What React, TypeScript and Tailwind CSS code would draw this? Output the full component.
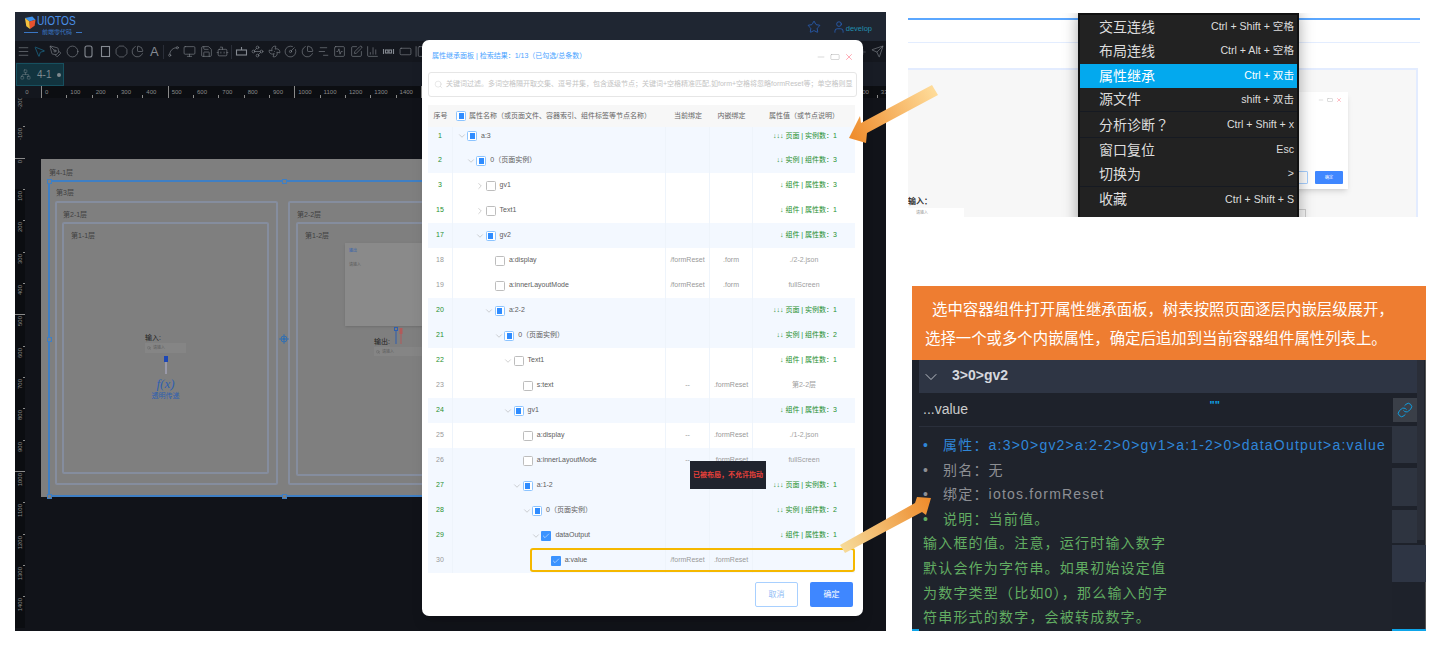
import type { ReactNode } from 'react'
import {
  Bot, ChartColumn, ChartNoAxesGantt, ChartPie, ChevronDown, ChevronRight, Circle, CircleGauge, Check, Fan,
  GalleryHorizontal, Link, Menu, Minus, Monitor, MousePointer2, Network, Octagon, PenTool, Plus,
  RectangleHorizontal, Save, Search, Send, Spline, SquareActivity, SquarePen, Star,
  User, Waypoints, X,
} from 'lucide-react'

type Check = 'none' | 'half' | 'checked'
type Row = {
  no: number
  depth: number
  name: string
  open?: boolean
  check: Check
  tint?: boolean
  bind?: string
  inner?: string
  value?: string
  node?: boolean
}

const rows: Row[] = [
  { no: 1, depth: 0, name: 'a:3', open: true, check: 'half', tint: true, value: '↓↓↓ 页面 | 实例数：1', node: true },
  { no: 2, depth: 1, name: '0（页面实例）', open: true, check: 'half', tint: true, value: '↓↓ 实例 | 组件数：3', node: true },
  { no: 3, depth: 2, name: 'gv1', open: false, check: 'none', value: '↓ 组件 | 属性数：3', node: true },
  { no: 15, depth: 2, name: 'Text1', open: false, check: 'none', value: '↓ 组件 | 属性数：1', node: true },
  { no: 17, depth: 2, name: 'gv2', open: true, check: 'half', tint: true, value: '↓ 组件 | 属性数：3', node: true },
  { no: 18, depth: 3, name: 'a:display', check: 'none', bind: '/formReset', inner: '.form', value: './2-2.json' },
  { no: 19, depth: 3, name: 'a:innerLayoutMode', check: 'none', bind: '/formReset', inner: '.form', value: 'fullScreen' },
  { no: 20, depth: 3, name: 'a:2-2', open: true, check: 'half', tint: true, value: '↓↓↓ 页面 | 实例数：1', node: true },
  { no: 21, depth: 4, name: '0（页面实例）', open: true, check: 'half', tint: true, value: '↓↓ 实例 | 组件数：2', node: true },
  { no: 22, depth: 5, name: 'Text1', open: true, check: 'none', value: '↓ 组件 | 属性数：1', node: true },
  { no: 23, depth: 6, name: 's:text', check: 'none', bind: '--', inner: '.formReset', value: '第2-2层' },
  { no: 24, depth: 5, name: 'gv1', open: true, check: 'half', tint: true, value: '↓ 组件 | 属性数：3', node: true },
  { no: 25, depth: 6, name: 'a:display', check: 'none', bind: '--', inner: '.formReset', value: './1-2.json' },
  { no: 26, depth: 6, name: 'a:innerLayoutMode', check: 'none', tint: true, bind: '--', inner: '.formReset', value: 'fullScreen' },
  { no: 27, depth: 6, name: 'a:1-2', open: true, check: 'half', tint: true, value: '↓↓↓ 页面 | 实例数：1', node: true },
  { no: 28, depth: 7, name: '0（页面实例）', open: true, check: 'half', tint: true, value: '↓↓ 实例 | 组件数：2', node: true },
  { no: 29, depth: 8, name: 'dataOutput', open: true, check: 'checked', tint: true, value: '↓ 组件 | 属性数：1', node: true },
  { no: 30, depth: 9, name: 'a:value', check: 'checked', tint: true, bind: '/formReset', inner: '.formReset' },
]

const hTicks = Array.from({ length: 34 }, (_, i) => i * 100)
const vTicks = Array.from({ length: 17 }, (_, i) => (i - 2) * 100)

const menuItems = [
  { label: '交互连线', keys: 'Ctrl + Shift + 空格', cls: 'h-[24px]' },
  { label: '布局连线', keys: 'Ctrl + Alt + 空格', cls: 'h-[24px]' },
  { label: '属性继承', keys: 'Ctrl + 双击', cls: 'h-[24px] mt-[1px] bg-[#03a9ee] text-white' },
  { label: '源文件', keys: 'shift + 双击', cls: 'h-[24px] border-b border-[#161a22]' },
  { label: '分析诊断', mark: '？', keys: 'Ctrl + Shift + x', cls: 'h-[26px] border-b border-[#161a22]' },
  { label: '窗口复位', keys: 'Esc', cls: 'h-[24px]' },
  { label: '切换为', keys: '>', cls: 'h-[25px] border-b border-[#161a22]' },
  { label: '收藏', keys: 'Ctrl + Shift + S', cls: 'h-[25px]' },
  { label: '发布文件', keys: '', cls: 'h-[25px]' },
]

function CheckBox({ state }: { state: Check }) {
  if (state === 'checked') {
    return (
      <span className="flex w-[10px] h-[10px] shrink-0 items-center justify-center bg-[#3b93ff] rounded-[1px]">
        <Check size={8} color="#ffffff" strokeWidth={1.5} />
      </span>
    )
  }
  if (state === 'half') {
    return (
      <span className="flex w-[10px] h-[10px] shrink-0 items-center justify-center bg-white border border-[#8cc4ff] rounded-[1.5px]">
        <span className="block w-[5px] h-[6px] bg-[#2f8cff]" />
      </span>
    )
  }
  return <span className="block w-[10px] h-[10px] shrink-0 bg-white border border-[#bdbdbd] rounded-[1.5px]" />
}

function TableRow({ row, first }: { row: Row; first?: boolean }) {
  return (
    <div
      className={`grid grid-cols-[25px_213px_44px_43px_102px] text-[7px] ${first ? 'h-[21px]' : 'h-[25px]'} ${
        row.tint ? 'bg-[#f3f8ff]' : 'bg-white'
      }`}
    >
      <div
        className={`flex items-center justify-center border-r border-[#eef4fb] ${first ? 'pb-[3px]' : ''} ${
          row.node ? 'text-[#1f8f2f]' : 'text-[#999999]'
        }`}
      >
        {row.no}
      </div>
      <div className={`flex items-center border-r border-[#eef4fb] ${first ? 'pb-[3px]' : ''}`}>
        <div className="flex items-center" style={{ paddingLeft: 3 + row.depth * 9.3 }}>
          <span className="flex w-[11px] shrink-0 justify-center text-[#999999]">
            {row.open === true && <ChevronDown size={10} strokeWidth={1.1} />}
            {row.open === false && <ChevronRight size={10} strokeWidth={1.1} />}
          </span>
          <CheckBox state={row.check} />
          <span className="ml-[4px] whitespace-nowrap text-[#5c5c5c]">{row.name}</span>
        </div>
      </div>
      <div className={`flex items-center justify-center border-r border-[#eef4fb] text-[#999999] ${first ? 'pb-[3px]' : ''}`}>
        {row.bind}
      </div>
      <div className={`flex items-center justify-center border-r border-[#eef4fb] text-[#999999] ${first ? 'pb-[3px]' : ''}`}>
        {row.inner}
      </div>
      <div
        className={`flex items-center whitespace-nowrap ${first ? 'pb-[3px]' : ''} ${
          row.node ? 'justify-end pr-[18px] text-[#1f8f2f]' : 'justify-center text-[#a0a0a0]'
        }`}
      >
        {row.value}
      </div>
    </div>
  )
}

function Tool({ children }: { children: ReactNode }) {
  return <span className="flex w-[16.4px] shrink-0 justify-center">{children}</span>
}

function ToolSep() {
  return (
    <span className="flex w-[2.6px] shrink-0 justify-center">
      <span className="block w-px h-[14px] bg-[#2a2e38]" />
    </span>
  )
}

function Toolbar() {
  const p = { size: 13, strokeWidth: 1.1 }
  return (
    <div className="flex h-[21px] items-center bg-[#14171e] text-[#858a92] shrink-0">
      <Tool><Menu {...p} /></Tool>
      <Tool><MousePointer2 {...p} className="text-[#1f7fa6]" /></Tool>
      <Tool><PenTool {...p} /></Tool>
      <Tool><Circle {...p} /></Tool>
      <Tool>
        <svg width="13" height="13" viewBox="0 0 13 13" fill="none" stroke="currentColor" strokeWidth="1.1">
          <rect x="3" y="1" width="7" height="11" rx="2" />
        </svg>
      </Tool>
      <Tool>
        <svg width="13" height="13" viewBox="0 0 13 13" fill="none" stroke="currentColor" strokeWidth="1.1">
          <rect x="2.5" y="1.5" width="8" height="10" />
        </svg>
      </Tool>
      <Tool><Octagon {...p} /></Tool>
      <Tool><ChartPie {...p} /></Tool>
      <Tool><span className="text-[13px] leading-none">A</span></Tool>
      <ToolSep />
      <Tool><Spline {...p} /></Tool>
      <Tool><Monitor {...p} /></Tool>
      <Tool><Save {...p} /></Tool>
      <Tool><Bot {...p} /></Tool>
      <ToolSep />
      <Tool>
        <svg width="13" height="13" viewBox="0 0 13 13" fill="none" stroke="currentColor" strokeWidth="1.1">
          <rect x="1.5" y="5" width="10" height="5" />
          <path d="M6.5 5V2" />
        </svg>
      </Tool>
      <Tool><Waypoints {...p} /></Tool>
      <Tool><Fan {...p} /></Tool>
      <Tool><CircleGauge {...p} /></Tool>
      <Tool><ChartPie {...p} /></Tool>
      <Tool><ChartNoAxesGantt {...p} /></Tool>
      <Tool><SquareActivity {...p} /></Tool>
      <Tool><SquarePen {...p} /></Tool>
      <Tool><ChartColumn {...p} /></Tool>
      <Tool>
        <svg width="13" height="13" viewBox="0 0 13 13" fill="none" stroke="currentColor" strokeWidth="1.1">
          <path d="M1.5 4v5M11.5 4v5" />
          <rect x="3.5" y="5" width="2.5" height="3" />
          <rect x="7" y="5" width="2.5" height="3" />
        </svg>
      </Tool>
      <Tool><RectangleHorizontal {...p} /></Tool>
      <Tool><GalleryHorizontal {...p} /></Tool>
      <div className="ml-auto flex items-center gap-[4px] pr-[2px]">
        <Plus size={8} strokeWidth={1.2} />
        <Send {...p} />
      </div>
    </div>
  )
}

function HRuler() {
  return (
    <div className="flex h-[12px] shrink-0 overflow-hidden bg-[#0c0e12] text-[6px] text-[#8a8a8a]">
      <div className="flex w-[26px] shrink-0 items-center justify-center bg-[#14171e] pr-[2px]">0</div>
      {hTicks.map((v) => (
        <div key={v} className="relative w-[25.33px] shrink-0 pl-[4px] pt-[1px] leading-[10px]">
          <span className={`absolute left-0 bottom-0 w-px bg-[#8a8a8a] ${v % 500 === 0 ? 'h-full' : 'h-[3px]'}`} />
          {v}
        </div>
      ))}
    </div>
  )
}

function VRuler() {
  return (
    <div className="w-[10px] shrink-0 overflow-hidden text-[6px] text-[#8a8a8a]">
      <div className="-mt-[3px]">
        {vTicks.map((v) => (
          <div key={v} className={`relative flex h-[31.33px] items-start justify-center pt-[2px] ${v > 0 ? 'bg-[#0b0d11]' : ''}`}>
            <span className={`absolute right-0 top-0 h-px bg-[#8a8a8a] ${v % 500 === 0 ? 'w-full' : 'w-[2px]'}`} />
            <span className="rotate-180 leading-none [writing-mode:vertical-rl]">{v}</span>
          </div>
        ))}
      </div>
    </div>
  )
}

function Handle({ className }: { className: string }) {
  return <span className={`absolute w-[5px] h-[5px] border border-[#3f7fc4] bg-[#7f7f7f] ${className}`} />
}

function Canvas() {
  return (
    <div className="relative flex-1 bg-[#111319]">
      <div className="absolute left-[16px] top-[61px] flex h-[338px] w-[760px] flex-col bg-[#7f7f7f] pl-[7px] pt-[8px] text-[7px] leading-[12px] text-[#3f3f3f]">
        <div className="ml-[1px] h-[13px]">第4-1层</div>
        <div className="relative flex-1 border-y-2 border-l-2 border-[#3f7fc4] pl-[5px] pt-[5px]">
          <div className="ml-[1px]">第3层</div>
          <div className="mt-[2px] flex gap-[10px]">
            <div className="h-[284px] w-[223px] border-2 border-[#858d9e] rounded-[2px] pl-[5px] pt-[6px]">
              <div className="ml-[1px]">第2-1层</div>
              <div className="relative mt-[1px] h-[252px] w-[207px] border-2 border-[#858d9e] rounded-[2px] pl-[7px] pt-[6px]">
                第1-1层
                <div className="absolute left-[81px] top-[109px] w-[41px] text-[#222222]">
                  <div className="leading-[10px]">输入:</div>
                  <div className="flex h-[10px] items-center gap-[2px] bg-[#858585] pl-[2px] text-[4px] leading-none text-[#5c5c5c]">
                    <Search size={4} />
                    请输入
                  </div>
                  <div className="ml-[19px] flex h-[24px] w-[4px] flex-col items-center">
                    <span className="mt-[3px] block h-[6px] w-[4px] bg-[#1d47b5]" />
                    <span className="block h-[12px] w-[2px] bg-[#9a9aaa]" />
                  </div>
                  <div className="flex flex-col items-center whitespace-nowrap text-[#2f5fb0]">
                    <span className="text-[13px] italic leading-[14px] [font-family:'Liberation_Serif',serif]">f(x)</span>
                    <span className="text-[7px] leading-[9px]">透明传递</span>
                  </div>
                </div>
              </div>
            </div>
            <div className="h-[284px] w-[223px] border-2 border-[#858d9e] rounded-[2px] pl-[6px] pt-[6px]">
              <div className="ml-[1px]">第2-2层</div>
              <div className="relative mt-[1px] h-[254px] w-[240px] border-2 border-[#858d9e] rounded-[2px] pl-[7px] pt-[6px]">
                第1-2层
                <div className="absolute left-[47px] top-[19px] h-[83px] w-[100px] bg-[#8a8a8a] pl-[4px] pt-[2px] text-[4px] text-[#5c5c5c] shadow-sm">
                  <div className="text-[#2f5fb0]">输出</div>
                  <div className="mt-[2px]">请输入</div>
                </div>
                <div className="absolute left-[76px] top-[113px] w-[60px] text-[#222222]">
                  <div className="leading-[10px]">输出:</div>
                  <div className="flex h-[9px] items-center gap-[2px] bg-[#858585] pl-[2px] text-[4px] leading-none text-[#5c5c5c]">
                    <Search size={4} />
                    请输入
                  </div>
                </div>
                <svg className="absolute left-[96px] top-[103px]" width="10" height="18" viewBox="0 0 10 18">
                  <path d="M2 3v14" stroke="#2f5fb0" strokeWidth="1" />
                  <rect x="0.5" y="0.5" width="3" height="3" fill="none" stroke="#2f5fb0" />
                  <path d="M7 3v14" stroke="#b25a5a" strokeWidth="1" />
                  <rect x="5.5" y="1" width="3" height="6" fill="#b25a5a" />
                </svg>
              </div>
            </div>
          </div>
          <Handle className="-left-[3.5px] -top-[3.5px]" />
          <Handle className="left-[232px] -top-[3.5px]" />
          <Handle className="-left-[3.5px] top-[155px]" />
          <Handle className="-left-[3.5px] -bottom-[3.5px]" />
          <Handle className="left-[232px] -bottom-[3.5px]" />
          <svg className="absolute left-[229px] top-[152px]" width="10" height="10" viewBox="0 0 10 10" fill="none" stroke="#2f6fb5">
            <circle cx="5" cy="5" r="3" strokeWidth="1" />
            <path d="M5 0v10M0 5h10" strokeWidth="0.8" />
            <circle cx="5" cy="5" r="1" fill="#2f6fb5" />
          </svg>
        </div>
      </div>
    </div>
  )
}

function Modal() {
  return (
    <div className="absolute left-[407px] top-[28px] flex h-[576px] w-[441px] flex-col rounded-[7px] bg-white px-[6px] shadow-lg">
      <div className="flex h-[32px] shrink-0 items-center justify-between pl-[4px] pt-[1px]">
        <span className="text-[7px] text-[#4aa3ff]">属性继承面板 | 检索结果：1/13（已勾选/总条数）</span>
        <div className="flex items-center gap-[4px] pr-[3px]">
          <Minus size={10} strokeWidth={1} className="text-[#a0a0a0]" />
          <RectangleHorizontal size={10} strokeWidth={1} className="text-[#a0a0a0]" />
          <X size={10} strokeWidth={1.2} className="text-[#ff5a6e]" />
        </div>
      </div>
      <div className="flex h-[25px] shrink-0 items-center gap-[3px] overflow-hidden rounded-[3px] border border-[#e6e6e6] pl-[5px] text-[7px] whitespace-nowrap text-[#c4c4c4]">
        <Search size={9} strokeWidth={1} className="shrink-0" />
        关键词过滤。多词空格隔开取交集、逗号并集，包含逐级节点；关键词+空格精准匹配,如form+空格将忽略formReset等；单空格则显
      </div>
      <div className="mt-[8px] w-[427px]">
        <div className="grid h-[22px] grid-cols-[25px_213px_44px_43px_102px] items-center bg-[#f7f7f7] text-[7px] text-[#666666]">
          <span className="text-center">序号</span>
          <span className="flex items-center gap-[3px] pl-[3px] whitespace-nowrap">
            <CheckBox state="half" />
            属性名称（或页面文件、容器索引、组件标签等节点名称）
          </span>
          <span className="text-center">当前绑定</span>
          <span className="text-center">内嵌绑定</span>
          <span className="text-center whitespace-nowrap">属性值（或节点说明）</span>
        </div>
        {rows.map((r, i) => (
          <TableRow key={r.no} row={r} first={i === 0} />
        ))}
      </div>
      <div className="mt-[9px] flex justify-end gap-[12px] pr-[4px] text-[8px]">
        <button className="h-[25px] w-[43px] rounded-[2px] border border-[#a8d0ff] bg-white text-[#8fbcf5]">取消</button>
        <button className="h-[25px] w-[43px] rounded-[2px] bg-[#3f87ff] text-white">确定</button>
      </div>
      <div className="absolute left-[108px] top-[508px] h-[24px] w-[325px] rounded-[3px] border-2 border-[#f5b800]" />
      <div className="absolute left-[268px] top-[421px] flex h-[28px] w-[76px] items-center justify-center bg-[#20242e] text-[7px] font-bold text-[#e8403a]">
        已被布局，不允许拖动
      </div>
    </div>
  )
}

function LeftShot() {
  return (
    <div className="relative flex h-[619px] w-[871px] shrink-0 flex-col overflow-hidden bg-[#111319]">
      <div className="flex h-[29px] shrink-0 items-start bg-[#1f2632] pl-[9px] pr-[14px] pt-[3px]">
        <svg width="12" height="14" viewBox="0 0 13 15" className="mt-[1px] shrink-0">
          <path d="M1 2 L9 0.5 L12.5 4 L6 6 Z" fill="#3b8fe8" />
          <path d="M1 2 L6 6 L6.5 14 L2.5 11 Z" fill="#f5c23e" />
          <path d="M6 6 L12.5 4 L11.5 10.5 L6.5 14 Z" fill="#e8522f" />
        </svg>
        <div className="ml-[1px] flex flex-col">
          <span className="origin-left scale-x-[0.81] text-[12.5px] leading-[13px] text-[#4a90e8]">UIOTOS</span>
          <div className="-ml-[13px] flex items-center gap-[4px] text-[6px] leading-[8px] text-[#3a76c4]">
            <span className="block h-px w-[14px] bg-[#3a76c4]" />
            前端零代码
            <span className="block h-px w-[6px] bg-[#3a76c4]" />
          </div>
        </div>
        <div className="ml-auto mt-[5px] flex items-center">
          <Star size={14} strokeWidth={1.2} className="text-[#2a6ad0]" />
          <User size={14} strokeWidth={1.2} className="ml-[11px] text-[#2a6ad0]" />
          <span className="mt-[3px] text-[7.5px] text-[#1f8fb0]">develop</span>
        </div>
      </div>
      <Toolbar />
      <div className="flex h-[24px] shrink-0 bg-[#181c25]">
        <div className="ml-px mt-px flex h-[23px] w-[48px] items-center gap-[6px] border border-[#17505f] bg-[#12343f] pl-[3px] text-[10px] text-[#7f8a8f]">
          <Network size={11} strokeWidth={1} />
          4-1
          <span className="block h-[4px] w-[4px] rounded-full bg-[#7f8a8f]" />
        </div>
      </div>
      <HRuler />
      <div className="flex flex-1 overflow-hidden">
        <VRuler />
        <Canvas />
      </div>
      <Modal />
    </div>
  )
}

function MenuShot() {
  return (
    <div className="relative h-[204px] w-[512px] overflow-hidden bg-white">
      <div className="mt-[5px] h-[2px] bg-[#5ba7ff]" />
      <div className="mt-[22px] h-[1px] bg-[#e3edff]" />
      <div className="relative mt-[25px] h-[149px] w-[510px] border-t-2 border-r-2 border-[#e3ecff] bg-[#f7f7f7]">
        <div className="absolute left-[340px] top-[22px] flex h-[97px] w-[100px] flex-col justify-between bg-white p-[5px] shadow-md">
          <div className="flex justify-end gap-[3px] pr-[1px] text-[#bdbdbd]">
            <Minus size={6} />
            <RectangleHorizontal size={6} />
            <X size={6} className="text-[#ff7a8a]" />
          </div>
          <div className="flex justify-end gap-[7px]">
            <span className="block h-[13px] w-[20px] rounded-[1px] border border-[#a8d0ff]" />
            <span className="flex h-[13px] w-[28px] items-center justify-center rounded-[1px] bg-[#3f87ff] text-[4px] text-white">确定</span>
          </div>
        </div>
        <div className="absolute left-[391px] top-[139px] h-[9px] w-[7px] border-t border-r border-[#cccccc]" />
        <div className="pt-[126px] text-[8px] font-bold leading-[12px] text-[#333333]">输入：</div>
        <div className="flex h-[9px] w-[56px] items-center bg-white pl-[8px] text-[4px] leading-none text-[#999999]">请输入</div>
      </div>
      <div className="absolute left-[170px] top-0 w-[221px] border-2 border-[#111111] bg-[#222222] shadow-[0_0_14px_rgba(0,0,0,0.35)]">
        {menuItems.map((m) => (
          <div key={m.label} className={`flex items-center justify-between pl-[19px] pr-[3px] text-[#dddddd] ${m.cls}`}>
            <span className="text-[14px]">
              {m.label}
              {m.mark && <span className="[font-family:'Noto_Sans_CJK_TC',sans-serif]">{m.mark}</span>}
            </span>
            <span className="text-[10.6px]">{m.keys}</span>
          </div>
        ))}
      </div>
    </div>
  )
}

function PropShot() {
  return (
    <div className="ml-[4px] flex h-[345px] w-[514px] flex-col overflow-hidden bg-[#1e222b]">
      <div className="h-[74px] shrink-0 bg-[#ee7d31] pl-[13px] pt-[9px] text-[15.4px] leading-[29px] text-white">
        <div className="pl-[7px] whitespace-nowrap">选中容器组件打开属性继承面板，树表按照页面逐层内嵌层级展开，</div>
        <div className="whitespace-nowrap">选择一个或多个内嵌属性，确定后追加到当前容器组件属性列表上。</div>
      </div>
      <div className="flex flex-1">
        <div className="relative w-[505px] shrink-0 pl-[7px]">
          <div className="flex h-[33px] w-[498px] items-center bg-[#2e3544] pl-[2px] text-[14px] font-bold text-[#d5d8de]">
            <ChevronDown size={20} strokeWidth={1} />
            <span className="ml-[11px] -mt-[3px]">3&gt;0&gt;gv2</span>
          </div>
          <div className="flex h-[33px] items-center pl-[4px] text-[14px] text-[#cccccc]">
            <span>...value</span>
            <span className="ml-auto mr-[173px] -mt-[8px] text-[11px] font-bold leading-none text-[#0ea5e9]">""</span>
            <span className="flex h-[24px] w-[24px] items-center justify-center bg-[#3a3f48] text-[#0ea5e9]">
              <Link size={16} strokeWidth={1.4} />
            </span>
          </div>
          <div className="absolute left-[7px] top-[66px] w-[473px] h-[205px] border-t border-[#2a2f3b] bg-[#1f232c] pl-[4px] pt-[6px] text-[14px] leading-[24.6px] tracking-[1.2px] whitespace-nowrap">
            <div className="flex text-[#2f86d8]"><span className="w-[20px]">•</span>属性：a:3&gt;0&gt;gv2&gt;a:2-2&gt;0&gt;gv1&gt;a:1-2&gt;0&gt;dataOutput&gt;a:value</div>
            <div className="flex text-[#8d8f94]"><span className="w-[20px]">•</span>别名：无</div>
            <div className="flex text-[#8d8f94]"><span className="w-[20px]">•</span>绑定：iotos.formReset</div>
            <div className="flex text-[#62ad62]"><span className="w-[20px]">•</span>说明：当前值。</div>
            <div className="text-[#62ad62]">输入框的值。注意，运行时输入数字</div>
            <div className="text-[#62ad62]">默认会作为字符串。如果初始设定值</div>
            <div className="text-[#62ad62]">为数字类型（比如0），那么输入的字</div>
            <div className="text-[#62ad62]">符串形式的数字，会被转成数字。</div>
          </div>
          <div className="absolute left-[480px] top-[66px] flex w-[25px] flex-col">
            <span className="block h-[37px] bg-[#2e3440]" />
            <span className="mt-[5px] block h-[38px] bg-[#2e3440]" />
            <span className="mt-[4px] block h-[33px] bg-[#2e3440]" />
            <span className="mt-[2px] block h-[37px] w-[34px] bg-[#2e3544]" />
          </div>
          <span className="absolute left-0 bottom-0 block h-[2px] w-[7px] bg-[#0ea5e9]" />
          <span className="absolute left-[480px] bottom-0 block h-[2px] w-[34px] bg-[#0ea5e9]" />
        </div>
        <div className="w-[9px] shrink-0 border-r border-[#555555]">
          <div className="h-[180px] w-[7px] bg-[#2a2e38]" />
        </div>
      </div>
    </div>
  )
}

export default function App() {
  return (
    <div className="relative flex h-[650px] w-[1440px] overflow-hidden bg-white pl-[15px] pt-[12px] [font-family:'Liberation_Sans','Noto_Sans_CJK_SC',sans-serif]">
      <LeftShot />
      <div className="ml-[22px] mt-[1px] flex w-[518px] flex-col">
        <MenuShot />
        <div className="h-[69px]" />
        <PropShot />
      </div>
      {/* callout arrows */}
      <svg className="pointer-events-none absolute left-0 top-0" width="1440" height="650" viewBox="0 0 1440 650">
        <defs>
          <linearGradient id="arrowTop" gradientUnits="userSpaceOnUse" x1="938" y1="88" x2="849" y2="138">
            <stop offset="0" stopColor="#ffdf9e" />
            <stop offset="1" stopColor="#ee8a2a" />
          </linearGradient>
          <linearGradient id="arrowBottom" gradientUnits="userSpaceOnUse" x1="840" y1="548" x2="931" y2="498">
            <stop offset="0" stopColor="#f6dc9c" />
            <stop offset="1" stopColor="#ee8a2a" />
          </linearGradient>
        </defs>
        <polygon points="849,138 860,116 861,123 932,85 938,95 867,133 866,143" fill="url(#arrowTop)" />
        <polygon points="840,545 915,503 917,497 931,498 926,515 922,512 845,553" fill="url(#arrowBottom)" />
      </svg>
    </div>
  )
}
